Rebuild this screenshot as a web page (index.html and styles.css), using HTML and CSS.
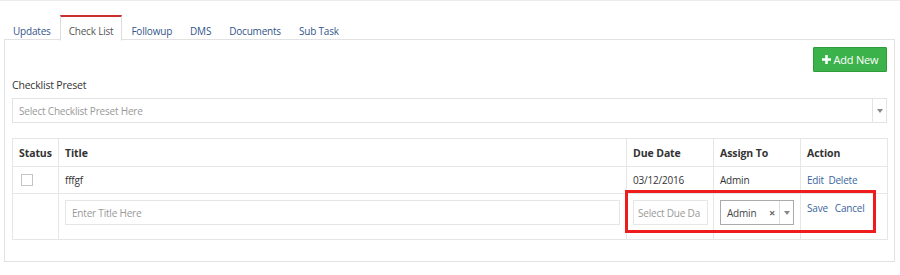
FILE: index.html
```html
<!DOCTYPE html>
<html>
<head>
<meta charset="utf-8">
<link rel="stylesheet" href="styles.css">
</head>
<body>
<div class="topbar"></div>
<div class="wrap">
  <ul class="tabs">
    <li class="tab">Updates</li>
    <li class="tab active">Check List</li>
    <li class="tab">Followup</li>
    <li class="tab">DMS</li>
    <li class="tab">Documents</li>
    <li class="tab">Sub Task</li>
  </ul>
  <div class="panel">
    <div class="toolbar">
      <button class="btn-add"><svg class="plus" viewBox="0 0 10 10" width="9" height="9"><path d="M3.6 0h2.8v3.6H10v2.8H6.4V10H3.6V6.4H0V3.6h3.6z" fill="#fff"/></svg>Add New</button>
    </div>
    <div class="label">Checklist Preset</div>
    <div class="select">
      <span class="placeholder">Select Checklist Preset Here</span>
      <span class="arrow"><span class="caret"></span></span>
    </div>
    <div class="table-wrap">
      <table class="grid">
        <colgroup>
          <col class="c-status"><col class="c-title"><col class="c-date"><col class="c-assign"><col class="c-action">
        </colgroup>
        <thead>
          <tr><th>Status</th><th>Title</th><th>Due Date</th><th>Assign To</th><th>Action</th></tr>
        </thead>
        <tbody>
          <tr class="row">
            <td><span class="check"></span></td>
            <td>fffgf</td>
            <td>03/12/2016</td>
            <td>Admin</td>
            <td><a class="link">Edit</a> <a class="link">Delete</a></td>
          </tr>
          <tr class="edit-row">
            <td></td>
            <td><div class="input"><span class="placeholder">Enter Title Here</span></div></td>
            <td><div class="input date"><span class="placeholder">Select Due Da</span></div></td>
            <td><div class="assign"><span class="val">Admin</span><span class="x">×</span><span class="arrow"><span class="caret"></span></span></div></td>
            <td class="actions"><a class="link">Save</a><a class="link">Cancel</a></td>
          </tr>
        </tbody>
      </table>
      <div class="highlight"></div>
    </div>
  </div>
</div>
</body>
</html>
```

FILE: styles.css
```css
* { box-sizing: border-box; }
html, body { margin: 0; padding: 0; background: #fff; }
body {
  font-family: "Open Sans", "Liberation Sans", sans-serif;
  font-size: 10px;
  letter-spacing: -0.2px;
  color: #333;
  width: 900px;
}
.topbar { height: 1px; border-bottom: 1px solid #ececec; }
.wrap { padding: 14px 5px 0 4px; }
.tabs {
  list-style: none;
  margin: 0;
  padding: 0;
  display: flex;
  height: 25px;
  position: relative;
  z-index: 1;
}
.tab {
  height: 25px;
  padding: 6px 8px 0 8px;
  line-height: 16px;
  color: #34558b;
  border: 1px solid transparent;
  border-top: 2px solid transparent;
  font-size: 10px;
}
.tab.active {
  color: #555;
  border-color: #ddd;
  border-top: 2px solid #c9302c;
  border-bottom: 1px solid #fff;
  background: #fff;
  height: 26px;
}
.panel {
  border: 1px solid #e2e2e2;
  margin-top: -1px;
  padding: 7px 7px 22px 7px;
  height: 223px;
}
.toolbar { display: flex; justify-content: flex-end; height: 25px; }
.btn-add {
  width: 74px;
  height: 25px;
  background: #3cb24a;
  border: 1px solid #2f9c3c;
  color: #fff;
  font-family: "Open Sans", "Liberation Sans", sans-serif;
  font-size: 11px;
  letter-spacing: -0.2px;
  padding: 0;
  display: flex;
  align-items: center;
  justify-content: center;
  gap: 3px;
  border-radius: 1px;
}
.plus { display: block; }
.label {
  margin-top: 1px;
  height: 25px;
  line-height: 24px;
  font-size: 10.5px;
  color: #333;
}
.select {
  height: 25px;
  border: 1px solid #e3e3e3;
  display: flex;
  align-items: center;
  padding-left: 6px;
}
.placeholder { color: #999; font-size: 10px; white-space: nowrap; }
.select .placeholder { flex: 1; }
.arrow {
  width: 14px;
  align-self: stretch;
  border-left: 1px solid #e3e3e3;
  display: flex;
  align-items: center;
  justify-content: center;
}
.caret {
  width: 0; height: 0;
  border-left: 3px solid transparent;
  border-right: 3px solid transparent;
  border-top: 4px solid #888;
}
.table-wrap { position: relative; margin-top: 15px; }
.grid {
  width: 875px;
  border-collapse: collapse;
  table-layout: fixed;
}
.c-status { width: 46px; }
.c-title { width: 568px; }
.c-date { width: 87px; }
.c-assign { width: 87px; }
.c-action { width: 87px; }
.grid th, .grid td {
  border: 1px solid #e6e6e6;
  text-align: left;
  padding: 0 6px;
  vertical-align: middle;
  font-size: 10px;
}
.grid th { height: 28px; font-weight: 700; color: #333; font-size: 10.5px; letter-spacing: -0.1px; }
.grid .row td { height: 27px; }
.check {
  display: block;
  width: 12px; height: 12px;
  border: 1px solid #c4c4c4;
  margin-left: 2px;
}
.link { color: #3a66a0; text-decoration: none; }
.link + .link { margin-left: 2px; }
.edit-row td { height: 46px; vertical-align: top; padding-top: 6px; }
.input {
  height: 25px;
  border: 1px solid #e6e6e6;
  display: flex;
  align-items: center;
  padding-left: 6px;
}
.input.date { width: 75px; padding-left: 4px; overflow: hidden; }
.assign {
  width: 74px;
  height: 25px;
  border: 1px solid #aaa;
  display: flex;
  align-items: center;
  padding-left: 6px;
}
.assign .val { flex: 1; color: #444; }
.assign .x { color: #666; font-size: 11px; font-weight: 700; margin-right: 4px; }
.assign .arrow { border-left: 1px solid #ddd; width: 14px; }
.actions { padding-top: 7px !important; }
.actions .link { margin-right: 5px; }
.highlight {
  position: absolute;
  left: 613px;
  top: 52px;
  width: 251px;
  height: 43px;
  border: 3px solid #ee1c1c;
  pointer-events: none;
}
```
